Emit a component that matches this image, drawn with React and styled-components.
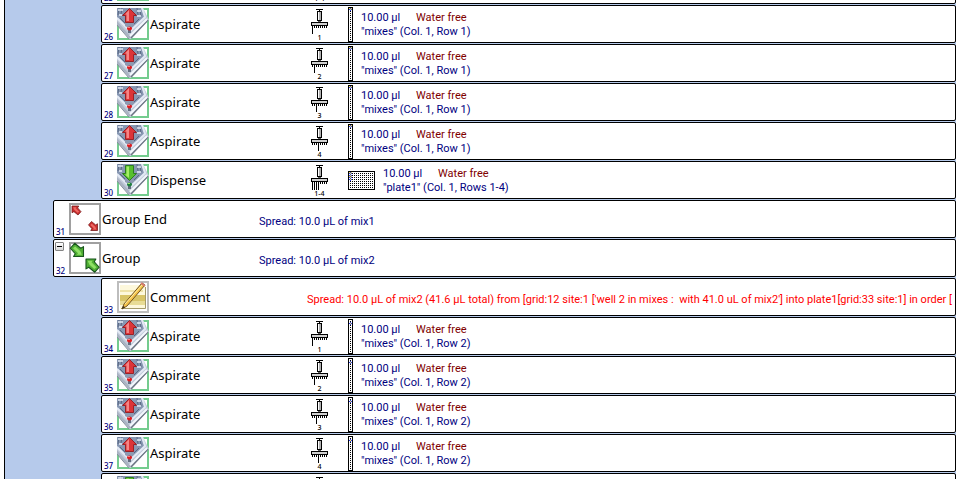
import React from "react";
import styled, { createGlobalStyle } from "styled-components";

const NAVY = "#000080";

const GlobalStyle = createGlobalStyle`
  * { box-sizing: border-box; }
  body { margin: 0; background: #ffffff; font-family: "Noto Sans", Tahoma, sans-serif; font-size: 11px; }
`;

const Viewport = styled.main`
  height: 100vh;
  overflow: hidden;
  padding: 0 2px 0 4px;
`;

const Script = styled.ol`
  display: flex;
  flex-direction: column;
  gap: 1px;
  list-style: none;
  margin: -34px 0 0;
  min-height: 100%;
  padding: 0 0 0 48px;
  border-left: 1px solid #000000;
  background: #b6caeb;
`;

const Row = styled.li`
  display: grid;
  grid-template-columns: 15px 32px 156px minmax(0, 1fr);
  flex: none;
  height: 38px;
  margin-left: ${(p) => (p.$nested ? "48px" : "0")};
  border: 1px solid #000000;
  border-radius: 2px;
  background: #ffffff;
  overflow: hidden;
`;

const Gutter = styled.div`
  display: flex;
  flex-direction: column;
  justify-content: space-between;
  padding: 2px 0 0 1px;
`;

const LineNumber = styled.span`
  margin-top: auto;
  padding-left: 1px;
  color: ${NAVY};
  font-size: 8px;
  font-weight: 500;
  line-height: 10px;
`;

const Toggle = styled.button`
  display: grid;
  place-items: center;
  width: 9px;
  height: 9px;
  padding: 0;
  border: 1px solid #848484;
  border-radius: 1px;
  background: linear-gradient(#ffffff, #d8d8d8);

  &::before {
    content: "";
    width: 5px;
    height: 1px;
    background: #000000;
  }
`;

const IconBox = styled.div`
  padding-top: 2px;

  svg { display: block; }
`;

const Title = styled.span`
  align-self: center;
  padding-left: 1px;
  color: #000000;
  font-size: 13px;
  line-height: 18px;
  white-space: nowrap;
`;

const Note = styled.span`
  align-self: center;
  padding: 5px 0 0 2px;
  overflow: hidden;
  color: ${(p) => (p.$warn ? "#ff0000" : NAVY)};
  font-family: Roboto, Tahoma, sans-serif;
  line-height: 14px;
  white-space: pre;
`;

const Transfer = styled.div`
  display: flex;
  align-items: flex-start;
  padding-left: 6px;
`;

const Tips = styled.div`
  display: flex;
  flex-direction: column;
  align-items: center;
  width: 17px;
  margin: 3px 20px 0 0;

  svg { display: block; flex: none; }
`;

const TipLabel = styled.span`
  margin-top: -1px;
  color: #000000;
  font-size: 7px;
  font-weight: 500;
  line-height: 8px;
  white-space: nowrap;
`;

const Labware = styled.div`
  display: flex;
  align-items: center;
  align-self: stretch;
  margin-right: 8px;
`;

const Details = styled.div`
  padding-top: 5px;
  color: ${NAVY};
  font-family: Roboto, Tahoma, sans-serif;
  line-height: 14px;
  white-space: nowrap;
`;

const Liquid = styled.div`
  display: grid;
  grid-template-columns: 55px auto;
`;

const LiquidClass = styled.span`
  color: #800000;
`;

function DeckIcon({ up }) {
  const light = up ? "#f58585" : "#a5ee66";
  const main = up ? "#dc3438" : "#57bf2e";
  const dark = up ? "#9a2126" : "#2c7d20";
  return (
    <svg width="32" height="32" viewBox="0 0 32 32" aria-hidden="true">
      <rect width="32" height="32" fill="#74cc8e" />
      <rect x="2" y="2" width="28" height="28" fill="#fff" />
      <path d="M0 0H26L32 12L14 31H12L0 15Z" fill="#c3cbda" />
      <path d="M0 13L13 28V31L0 17Z" fill="#aab3c3" />
      <path d="M0 17L12 31" stroke="#858d9b" />
      <path d="M31 12L14 30" stroke="#6d7583" strokeWidth="1.500" />
      <path d="M30 11L13 28" stroke="#f4f7fd" strokeWidth="2" />
      <path d="M0 0H24L28 9L13 22L0 9Z" fill="#8797b2" />
      <path d="M25 0L28 9L13 23L0 10" fill="none" stroke="#e3e9f4" strokeWidth="2" />
      <path d="M2 0L1 7M5 0L4 6M20 0L21 7M23 2L24 8M3 10L8 15M17 16L22 11" stroke="#596883" />
      <path d="M1 2H6M20 3H24M2 7H5M20 8H24" stroke="#e6edf8" strokeWidth="1.500" />
      <path d="M8 15H17V18L14 19H10L8 18Z" fill="#8d9ab2" />
      <rect x="11" y="22" width="3" height="3" fill="#626d80" />
      {up ? (
        <path d="M12.500 .5L19.500 7.500H16.500V14.500H8.500V7.500H5.500Z" fill={main} stroke={dark} />
      ) : (
        <path d="M12.500 16.500L19.500 9.500H16.500V1.500H8.500V9.500H5.500Z" fill={main} stroke={dark} />
      )}
      {up ? (
        <path d="M12 2L8 6.500H9.500V13H12Z" fill={light} />
      ) : (
        <path d="M9.500 2.500H12V14L8 10.500H9.500Z" fill={light} />
      )}
      <ellipse cx="12.500" cy="20.500" rx="2.500" ry="2" fill={up ? "#e01c20" : "#1f8040"} />
      <rect x="11" y="19" width="2" height="1" fill={light} />
    </svg>
  );
}

function BlockArrow({ transform, red }) {
  return (
    <g transform={transform} strokeLinejoin="round">
      <path
        d="M0 0H9L7.500 2.500L12 7.500L8 12L2.500 7.500L0 9Z"
        fill={red ? "#c93030" : "#4fae34"}
        stroke={red ? "#741616" : "#17541b"}
        strokeWidth="1"
      />
      <path d="M1.500 1.500H6L5 3L9.500 7.500L7.500 9L3 5Z" fill={red ? "#ee6a64" : "#8fe065"} />
    </g>
  );
}

function GroupIcon({ end }) {
  return (
    <svg width="32" height="32" viewBox="0 0 32 32" aria-hidden="true">
      <rect x="1" y="1" width="30" height="30" fill="#fff" stroke="#a0a0a0" strokeWidth="2" />
      {end ? (
        <>
          <BlockArrow red transform="translate(3 3) scale(.75)" />
          <BlockArrow red transform="translate(28.500 27.500) scale(-.75)" />
        </>
      ) : (
        <>
          <BlockArrow transform="translate(14.500 14.500) scale(-1.100)" />
          <BlockArrow transform="translate(17 17) scale(1.100)" />
        </>
      )}
    </svg>
  );
}

function CommentIcon() {
  return (
    <svg width="32" height="32" viewBox="0 0 32 32" aria-hidden="true">
      <rect x="1" y="1" width="30" height="30" fill="#fff" stroke="#bdbdbd" strokeWidth="2" />
      <rect x="3" y="4" width="25" height="24" fill="#fdf8dc" />
      <path d="M3 9H26V11H3Z" fill="#eee2a8" />
      <path d="M3 14H28V20H3Z" fill="#d8c467" />
      <path d="M3 20H28V24H3Z" fill="#e8dc96" />
      <path d="M4 27.500H28.500V6" fill="none" stroke="#a49a69" />
      <path d="M5 28L7 23L25 2L28 4L10 25Z" fill="#f5c34a" stroke="#735522" />
      <path d="M8 23L25 4" stroke="#fff0a8" />
      <path d="M24 2L28 5" stroke="#d77c72" strokeWidth="2" />
      <path d="M5 28L6 25L8 26Z" fill="#332b20" />
    </svg>
  );
}

function PipetteIcon({ tips }) {
  const teeth = [1, 3, 5, 7, 9, 11, 13, 15];
  return (
    <svg width="17" height="26" viewBox="0 0 17 26" shapeRendering="crispEdges" aria-hidden="true">
      <path d="M5 0H12V1H9V2H8V1H5Z" fill="#000" />
      <rect x="6" y="2" width="5" height="10" fill="#000" />
      <rect x="7" y="3" width="1" height="8" fill="#fff" />
      <rect x="8" y="3" width="2" height="8" fill="#b0b0b0" />
      <rect x="7" y="12" width="3" height="2" fill="#555" />
      <rect x="0" y="13" width="17" height="4" fill="#000" />
      <rect x="1" y="14" width="15" height="2" fill="#d0d0d0" />
      {teeth.map((x, i) => (
        <rect key={x} x={x} y="17" width="1" height={tips.includes(i + 1) ? 8 : 2} fill="#000" />
      ))}
    </svg>
  );
}

function PlateIcon({ cols, rows, marked }) {
  const width = cols * 2 + 3;
  const height = rows * 2 + 3;
  const wells = [];
  for (let c = 0; c < cols; c += 1) {
    for (let r = 0; r < rows; r += 1) wells.push([c * 2 + 2, r * 2 + 2]);
  }
  return (
    <svg width={width} height={height} viewBox={`0 0 ${width} ${height}`} shapeRendering="crispEdges" aria-hidden="true">
      <rect width={width} height={height} fill="#000" />
      <rect x="1" y="1" width={width - 2} height={height - 2} fill="#fff" />
      {wells.map(([x, y]) => (
        <rect key={`${x}-${y}`} x={x} y={y} width="1" height="1" fill="#000" />
      ))}
      {marked.map((r) => (
        <g key={r}>
          <path d={`M2 ${r * 2 - 1}h1v3h-1zM1 ${r * 2}h3v1h-3z`} fill="#2a3cf0" />
          <rect x="2" y={r * 2} width="1" height="1" fill="#ffee20" />
          {r % 2 === 1 && <path d={`M1 ${r * 2 - 1}h1v1h-1zM3 ${r * 2 - 1}h1v1h-1z`} fill="#ffe84a" />}
        </g>
      ))}
    </svg>
  );
}

function TransferCells({ step }) {
  const plate = step.kind === "Dispense";
  return (
    <Transfer>
      <Tips>
        <PipetteIcon tips={step.tips} />
        <TipLabel>{plate ? "1-4" : step.tips[0]}</TipLabel>
      </Tips>
      <Labware>
        {plate ? (
          <PlateIcon cols={12} rows={8} marked={[1, 2, 3, 4]} />
        ) : (
          <PlateIcon cols={1} rows={16} marked={[step.well]} />
        )}
      </Labware>
      <Details>
        <Liquid>
          <span>10.00 µl</span>
          <LiquidClass>Water free</LiquidClass>
        </Liquid>
        <div>{plate ? '"plate1" (Col. 1, Rows 1-4)' : `"mixes" (Col. 1, Row ${step.well})`}</div>
      </Details>
    </Transfer>
  );
}

const aspirate = (line, tip, well) => ({ line, kind: "Aspirate", tips: [tip], well });
const dispense = (line) => ({ line, kind: "Dispense", tips: [1, 2, 3, 4] });

const steps = [
  dispense(25),
  aspirate(26, 1, 1),
  aspirate(27, 2, 1),
  aspirate(28, 3, 1),
  aspirate(29, 4, 1),
  dispense(30),
  { line: 31, kind: "Group End", note: "Spread: 10.0 µL of mix1" },
  { line: 32, kind: "Group", note: "Spread: 10.0 µL of mix2" },
  {
    line: 33,
    kind: "Comment",
    note: "Spread: 10.0 µL of mix2 (41.6 µL total) from [grid:12 site:1 ['well 2 in mixes :  with 41.0 uL of mix2'] into plate1[grid:33 site:1] in order [",
  },
  aspirate(34, 1, 2),
  aspirate(35, 2, 2),
  aspirate(36, 3, 2),
  aspirate(37, 4, 2),
  dispense(38),
];

function StepIcon({ kind }) {
  if (kind === "Comment") return <CommentIcon />;
  if (kind.startsWith("Group")) return <GroupIcon end={kind === "Group End"} />;
  return <DeckIcon up={kind === "Aspirate"} />;
}

function StepRow({ step }) {
  return (
    <Row $nested={!step.kind.startsWith("Group")}>
      <Gutter>
        {step.kind === "Group" && <Toggle type="button" aria-label="Collapse group" aria-expanded="true" />}
        <LineNumber>{step.line}</LineNumber>
      </Gutter>
      <IconBox>
        <StepIcon kind={step.kind} />
      </IconBox>
      <Title>{step.kind}</Title>
      {step.note ? <Note $warn={step.kind === "Comment"}>{step.note}</Note> : <TransferCells step={step} />}
    </Row>
  );
}

export default function App() {
  return (
    <>
      <GlobalStyle />
      <Viewport>
        <Script>
          {steps.map((step) => (
            <StepRow key={step.line} step={step} />
          ))}
        </Script>
      </Viewport>
    </>
  );
}
